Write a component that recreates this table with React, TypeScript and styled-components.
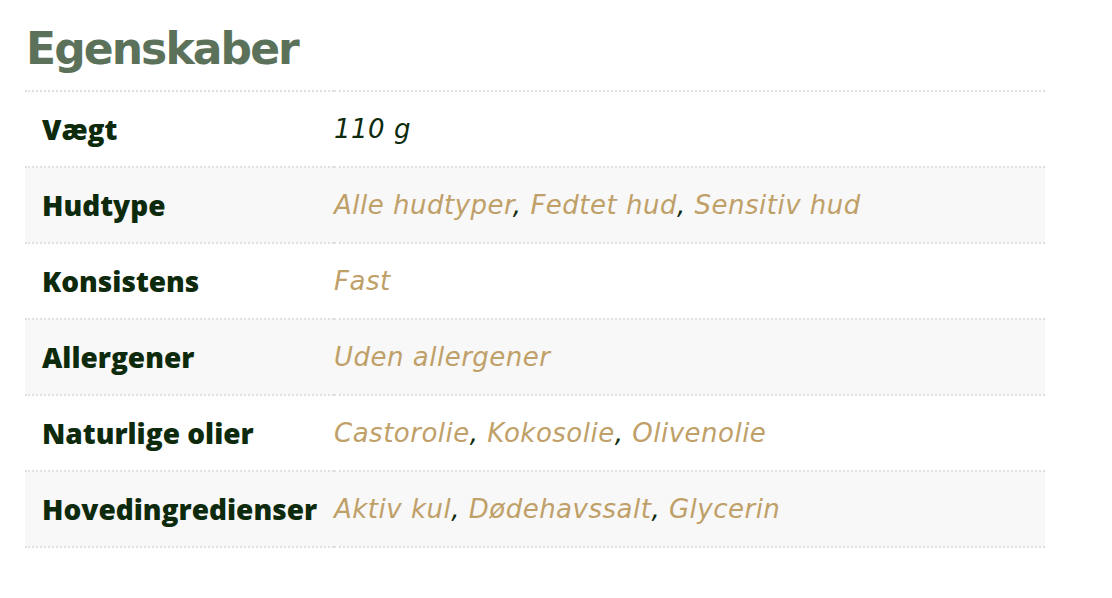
import { createGlobalStyle, styled } from 'styled-components';

const GlobalStyle = createGlobalStyle`
  body {
    margin: 0;
    background: #fff;
    font-family: 'Open Sans', 'Liberation Sans', sans-serif;
  }
`;

type Row = { label: string; values: string[]; plain?: boolean };

const rows: Row[] = [
  { label: 'Vægt', values: ['110 g'], plain: true },
  { label: 'Hudtype', values: ['Alle hudtyper', 'Fedtet hud', 'Sensitiv hud'] },
  { label: 'Konsistens', values: ['Fast'] },
  { label: 'Allergener', values: ['Uden allergener'] },
  { label: 'Naturlige olier', values: ['Castorolie', 'Kokosolie', 'Olivenolie'] },
  { label: 'Hovedingredienser', values: ['Aktiv kul', 'Dødehavssalt', 'Glycerin'] },
];

const App = () => {
  return (
    <Page>
      <GlobalStyle />
      <Title>Egenskaber</Title>
      <Table>
        <tbody>
          {rows.map((row, i) => (
            <Tr key={row.label} $shaded={i % 2 === 1}>
              <Th>{row.label}</Th>
              <Td>
                {row.plain
                  ? row.values[0]
                  : row.values.map((v, j) => (
                      <span key={v}>
                        {j > 0 && ', '}
                        <Link href="#">{v}</Link>
                      </span>
                    ))}
              </Td>
            </Tr>
          ))}
        </tbody>
      </Table>
    </Page>
  );
};

export default App;

const Page = styled.div`
  padding: 23px 67px 0 25px;
  width: 1020px;
`;

const Title = styled.h2`
  margin: 0 0 15px 1px;
  font-family: 'DejaVu Sans', 'Open Sans', sans-serif;
  font-weight: bold;
  font-size: 44px;
  line-height: 52px;
  letter-spacing: -1.9px;
  color: #5c7159;
`;

const Table = styled.table`
  width: 1020px;
  border-collapse: collapse;
  border-top: 2px dotted #e0e0e0;
`;

const Tr = styled.tr<{ $shaded: boolean }>`
  height: 76px;
  background: ${(p) => (p.$shaded ? '#f8f8f8' : '#fff')};
  border-bottom: 2px dotted #e0e0e0;
`;

const Th = styled.th`
  width: 292px;
  padding: 0 0 0 17px;
  text-align: left;
  font-size: 28px;
  font-weight: 800;
  color: #0d2a0c;
  white-space: nowrap;
`;

const Td = styled.td`
  padding: 0;
  font-family: 'DejaVu Sans', 'Open Sans', sans-serif;
  font-size: 26px;
  font-style: italic;
  letter-spacing: 0.5px;
  color: #0d2a0c;
`;

const Link = styled.a`
  color: #bfa068;
  text-decoration: none;
`;
